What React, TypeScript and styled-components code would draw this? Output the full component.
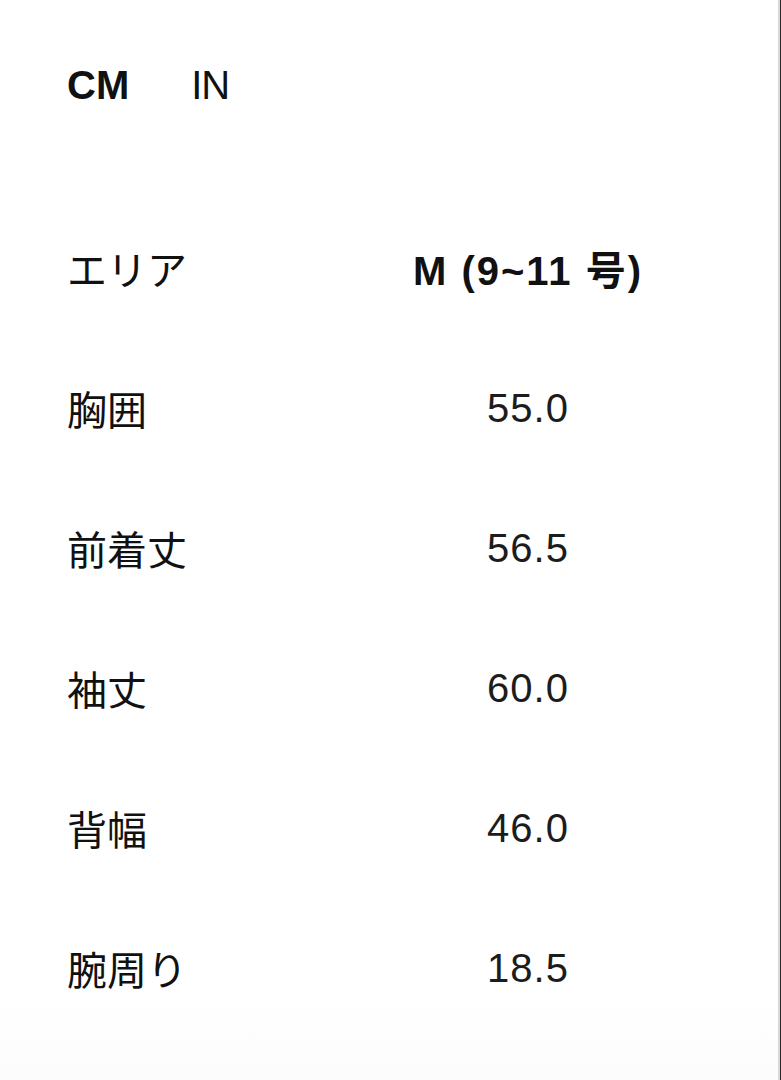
import React from "react";
import styled, { createGlobalStyle } from "styled-components";

const Global = createGlobalStyle`
  html, body { margin: 0; padding: 0; background: #fff; }
  body { font-family: "Liberation Sans", "Noto Sans CJK JP", Arial, sans-serif; color: #111; }
`;

const Page = styled.div`
  box-sizing: border-box;
  width: 781px;
  height: 1080px;
  overflow: hidden;
  border-right: 1px solid #2a2a2a;
  box-shadow: inset -2px 0 0 #d8d8d8;
  padding: 58px 0 0 67px;
  background: linear-gradient(to bottom, #fff 0%, #fff 92%, #fcfcfc 100%);
`;

const UnitBar = styled.div`
  display: flex;
  align-items: center;
  gap: 62px;
  height: 54px;
`;

const Unit = styled.span<{ $active?: boolean }>`
  font-size: 40px;
  font-weight: ${(p) => (p.$active ? 700 : 400)};
  letter-spacing: ${(p) => (p.$active ? "0" : "-1px")};
`;

const Table = styled.div`
  display: grid;
  grid-template-columns: 343px 236px;
  grid-auto-rows: 140px;
  margin-top: 86px;
`;

const Cell = styled.div<{ $center?: boolean; $bold?: boolean }>`
  display: flex;
  align-items: center;
  justify-content: ${(p) => (p.$center ? "center" : "flex-start")};
  font-size: 40px;
  font-weight: ${(p) => (p.$bold ? 700 : 400)};
  letter-spacing: ${(p) => (p.$bold ? "2px" : p.$center ? "1px" : "0")};
  color: ${(p) => (p.$center && !p.$bold ? "#1c1c1c" : "#111")};
  white-space: nowrap;
`;

const rows: [string, string][] = [
  ["胸囲", "55.0"],
  ["前着丈", "56.5"],
  ["袖丈", "60.0"],
  ["背幅", "46.0"],
  ["腕周り", "18.5"],
];

export default function App() {
  return (
    <>
      <Global />
      <Page>
        <UnitBar>
          <Unit $active>CM</Unit>
          <Unit>IN</Unit>
        </UnitBar>
        <Table>
          <Cell>エリア</Cell>
          <Cell $center $bold>M (9~11 号)</Cell>
          {rows.map(([k, v]) => (
            <React.Fragment key={k}>
              <Cell>{k}</Cell>
              <Cell $center>{v}</Cell>
            </React.Fragment>
          ))}
        </Table>
      </Page>
    </>
  );
}
